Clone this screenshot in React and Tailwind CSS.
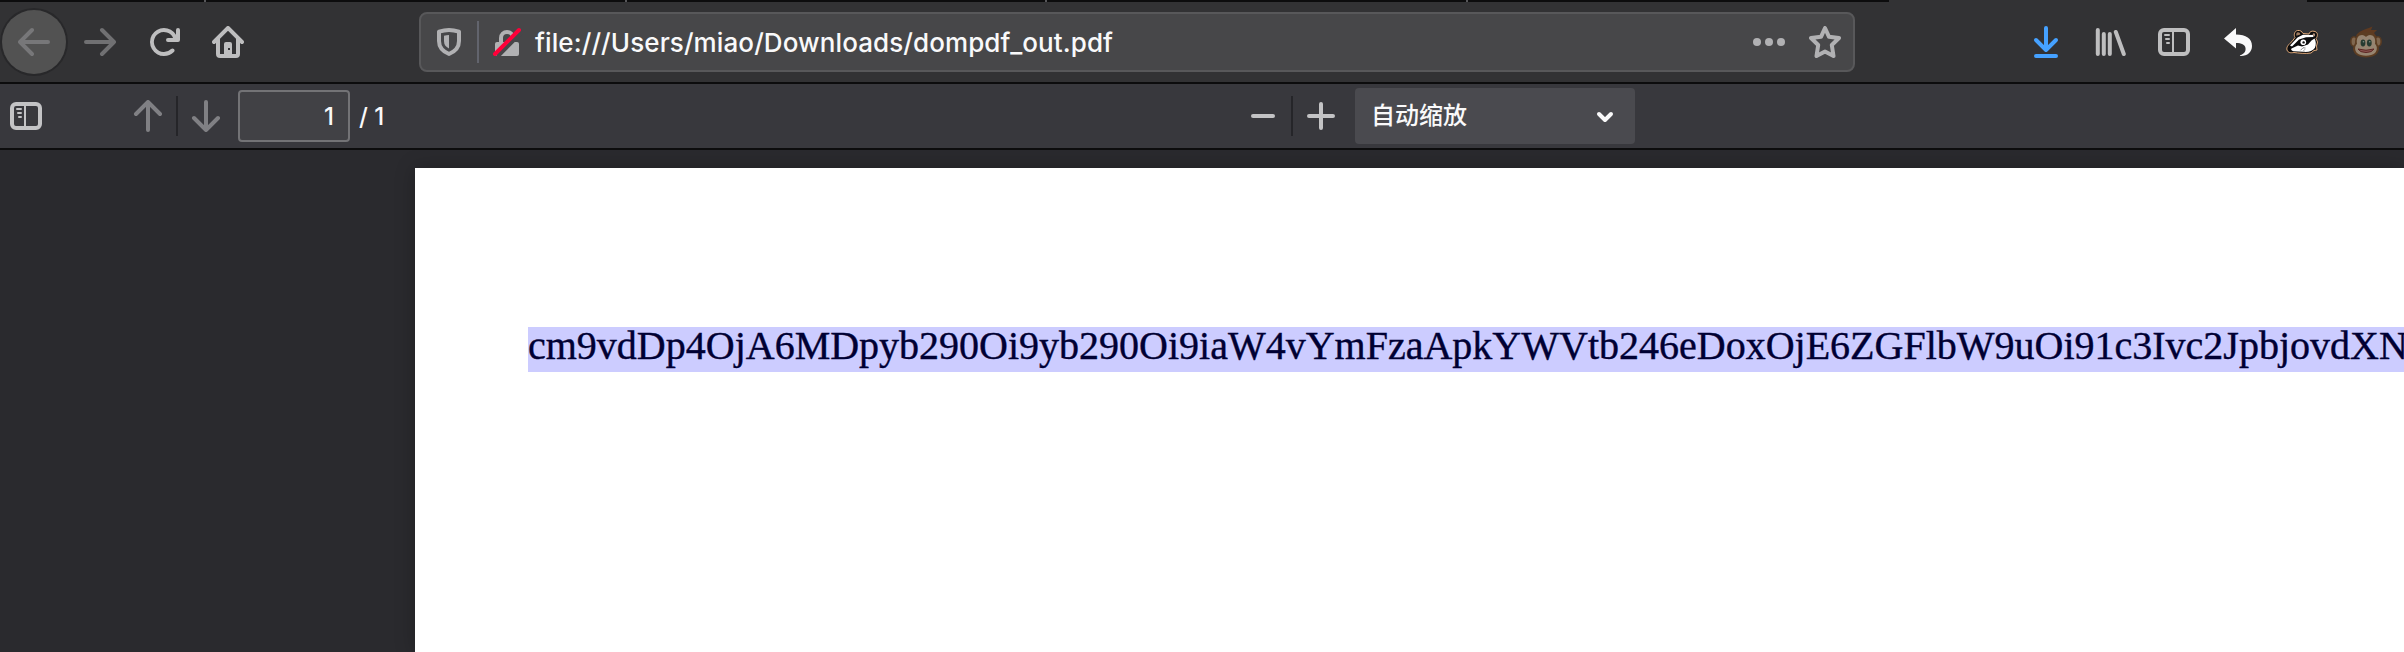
const Arrow = ({ className, d }) => (
  <svg className={className} viewBox="0 0 32 32" fill="none" stroke="currentColor" strokeWidth="4" strokeLinecap="round" strokeLinejoin="round">
    <path d={d} />
  </svg>
);

const SidebarIcon = ({ className }) => (
  <svg className={className} viewBox="0 0 32 32" fill="none" stroke="currentColor">
    <rect x="2" y="4" width="28" height="24" rx="4" strokeWidth="4" />
    <path d="M15 5V27" strokeWidth="2" />
    <path d="M7 9H11M8 13H11M9 17H11" strokeWidth="2" strokeLinecap="round" />
  </svg>
);

const ReloadIcon = () => (
  <svg className="size-8" viewBox="0 0 16 16" fill="currentColor">
    <path d="M15 1a1 1 0 0 0-1 1v2.418A6.995 6.995 0 1 0 8 15a6.954 6.954 0 0 0 4.95-2.05 1 1 0 0 0-1.414-1.414A5.019 5.019 0 1 1 12.549 6H10a1 1 0 0 0 0 2h5a1 1 0 0 0 1-1V2a1 1 0 0 0-1-1z" />
  </svg>
);

const HomeIcon = () => (
  <svg className="size-8" viewBox="0 0 16 16" fill="currentColor" fillRule="evenodd">
    <path d="M15.707 7.293l-7-7a1 1 0 0 0-1.414 0l-7 7a1 1 0 0 0 1.414 1.414L2 8.414V14a2 2 0 0 0 2 2h8a2 2 0 0 0 2-2V8.414l.293.293a1 1 0 0 0 1.414-1.414zM12 14h-2V9a1 1 0 0 0-1-1H7a1 1 0 0 0-1 1v5H4V6.414l4-4 4 4zM8 11h1v1H8z" />
  </svg>
);

const ShieldIcon = () => (
  <svg className="size-8" viewBox="0 0 32 32" fill="none">
    <path d="M16 4C12.500 4 9 4.700 6 5.600V15C6 21 10 25.500 16 28C22 25.500 26 21 26 15V5.600C23 4.700 19.500 4 16 4Z" stroke="currentColor" strokeWidth="4" strokeLinejoin="round" />
    <path d="M16 9V22.500C12.500 20.700 11 18.500 11 15V9.800C12.500 9.300 14.500 9 16 9Z" fill="currentColor" />
  </svg>
);

const LockIcon = () => (
  <svg className="size-8" viewBox="0 0 32 32" fill="none">
    <path d="M10 17V12a6 6 0 0 1 12 0V17" stroke="currentColor" strokeWidth="4" />
    <rect x="4" y="16" width="24" height="14" rx="2" fill="currentColor" />
    <path d="M6.500 30.500L31.500 5.500" stroke="#474749" strokeWidth="4" />
    <path d="M4 28L28 4" stroke="#ff0039" strokeWidth="4" strokeLinecap="round" />
  </svg>
);

const StarIcon = () => (
  <svg className="size-8" viewBox="0 0 32 32" fill="none" stroke="currentColor" strokeWidth="4" strokeLinejoin="round">
    <path d="M16 2L20 10.800L30 12L22.800 19L24.500 30L16 25.500L7.500 30L9.200 19L2 12L12 10.800Z" />
  </svg>
);

const LibraryIcon = () => (
  <svg className="size-8" viewBox="0 0 32 32" fill="none" stroke="currentColor" strokeWidth="4" strokeLinecap="round">
    <path d="M4 4V28M10 8V28M16 8V28M22 6L30 28" transform="translate(-.2 0)" />
  </svg>
);

const UndoIcon = () => (
  <svg className="size-8" viewBox="0 0 32 32" fill="#f9f9fa">
    <path d="M2 12.500L14 2V8.500C24 8.500 30 12.500 30 20C30 26 25.500 30 19 30C18 30 17.500 29.500 18.300 29.200C22 28 24 25.500 23.500 22C23 18.500 19.500 17 14 17V22.500Z" />
  </svg>
);

const BadgerIcon = () => (
  <svg className="size-8" viewBox="0 0 32 32">
    <path d="M1 24C0 21 3 18 6 15.500L9 11.500C7.500 9 8.500 5 11.500 4.500C14 4 16 5.500 17 7.500L23 8C23.500 5.500 26 4.500 29 5.500C32 6.500 32 10 30 12.500L31.500 16L30.500 20L31 24L28 24.500L25 27C20 28 12 27 8 26.500C5 27 2 27 1 24Z" fill="#0b0b0c" stroke="#dfa878" strokeWidth="1" />
    <path d="M10.500 9.800C9.800 8 10.600 6.300 12 6.300C13.400 6.300 14.200 7.200 14.400 8.500Z" fill="#9c7a60" />
    <path d="M26.500 8.200C27 7 28.600 6.800 29 8C29.400 9.300 28.600 10.300 28 10.800Z" fill="#b3917a" />
    <path d="M4 19.500L11.500 11.500L17 8.700L27 9L27.500 11L20 11.300L13 13.500L6 20.500Z" fill="#fff" />
    <path d="M5.500 22.500L12 19.500L16 20.500L22 18.500L25.500 14.500L28.500 12.500C30 15 30.400 19 28.800 22C26.500 25.300 22 26.400 17 25.800L7.500 25.200C5.500 24.800 4.500 23.300 5.500 22.500Z" fill="#fff" />
    <circle cx="17.300" cy="16.300" r="2.800" fill="#fff" />
    <circle cx="17.600" cy="16.400" r="1.200" fill="#111" />
    <path d="M14.500 24.300L17 21.800L19.500 22M17.500 24.800L19 23.300" fill="none" stroke="#777" strokeWidth=".9" />
  </svg>
);

const MonkeyIcon = () => (
  <svg className="size-8" viewBox="0 0 32 32">
    <path d="M6 10C8 5 14 4 22.500 0.500L21 4L27 4L24 7L27 11Z" fill="#5f3a20" />
    <ellipse cx="4" cy="15.500" rx="3.200" ry="4.800" fill="#80674f" stroke="#573a22" strokeWidth="1.600" />
    <ellipse cx="28" cy="15.500" rx="3.200" ry="4.800" fill="#80674f" stroke="#573a22" strokeWidth="1.600" />
    <path d="M5 17C5 9 9 6 16 6S27 9 27 17L29 22C29 28 24 31.500 16 31.500S3 28 3 22Z" fill="#5c3d22" />
    <path d="M7 18C6 12 8.500 9 12 9C14 9 15 10 16 11C17 10 18 9 20 9C23.500 9 26 12 25 18C27.500 20 27.500 24.500 25 27C21 30.500 11 30.500 7 27C4.500 24.500 4.500 20 7 18Z" fill="#968470" />
    <ellipse cx="13" cy="17" rx="2.400" ry="3.400" fill="#263a30" />
    <ellipse cx="19.300" cy="17" rx="2.400" ry="3.400" fill="#263a30" />
    <circle cx="13.500" cy="15.800" r=".8" fill="#7d9085" />
    <circle cx="19.800" cy="15.800" r=".8" fill="#7d9085" />
    <path d="M8 23Q16 25.500 24 23Q22 26.500 16 26.500T8 23Z" fill="#8b5550" stroke="#5b2420" strokeWidth="1" strokeLinejoin="round" />
  </svg>
);

const TabStrip = () => (
  <div className="flex h-0.5 shrink-0 justify-between">
    <div className="flex w-[1889px] bg-[#0c0c0d] pl-[204px]">
      <div className="mr-[419px] w-0.5 bg-[#57575a]" />
      <div className="mr-[418px] w-0.5 bg-[#57575a]" />
      <div className="mr-[419px] w-0.5 bg-[#57575a]" />
      <div className="w-0.5 bg-[#57575a]" />
    </div>
    <div className="w-[97px] bg-[#0c0c0d]" />
  </div>
);

const NavBar = () => (
  <div className="flex h-20 shrink-0 items-center pl-0.5 text-[#bebebf]">
    <div className="flex size-16 items-center justify-center rounded-full bg-[#525252] text-[#777779] ring-2 ring-[#28282a]">
      <Arrow className="size-8" d="M30 16H2M14 4L2 16L14 28" />
    </div>
    <Arrow className="ml-[18px] size-8 text-[#707072]" d="M2 16H30M18 4L30 16L18 28" />
    <div className="ml-8"><ReloadIcon /></div>
    <div className="ml-8"><HomeIcon /></div>
    <div className="ml-[175px] flex h-[60px] w-[1436px] items-center rounded-lg border-2 border-[#58585a] bg-[#474749] text-[#b1b1b3]">
      <div className="ml-3"><ShieldIcon /></div>
      <div className="ml-3 h-[42px] w-0.5 bg-[#62646d]" />
      <div className="ml-3"><LockIcon /></div>
      <span className="ml-3 pt-0.5 whitespace-nowrap font-[Inter,sans-serif] text-[26px] leading-8 font-medium tracking-[0.1px] text-[#f9f9fa]">
        file:///Users/miao/Downloads/dompdf_out.pdf
      </span>
      <svg className="ml-auto size-8" viewBox="0 0 32 32" fill="currentColor">
        <circle cx="4" cy="16" r="4" />
        <circle cx="16" cy="16" r="4" />
        <circle cx="28" cy="16" r="4" />
      </svg>
      <div className="mr-3 ml-6"><StarIcon /></div>
    </div>
    <div className="mr-[22px] ml-auto flex items-center gap-8">
      <Arrow className="size-8 text-[#45a1ff]" d="M16 2V24M6 14L16 24L26 14M6 30H26" />
      <LibraryIcon />
      <SidebarIcon className="size-8" />
      <UndoIcon />
      <BadgerIcon />
      <MonkeyIcon />
    </div>
  </div>
);

const PdfToolbar = () => (
  <div className="flex h-[68px] shrink-0 items-center border-y-2 border-[#0c0c0d] bg-[#38383d] pl-2.5 font-[Inter,'Noto_Sans_CJK_SC',sans-serif] text-2xl font-medium text-[#c3c3c5]">
    <SidebarIcon className="size-8" />
    <Arrow className="ml-[90px] size-8 text-[#808084]" d="M16 30V2M4 14L16 2L28 14" />
    <div className="ml-3 h-10 w-0.5 bg-[#252529]" />
    <Arrow className="ml-3 size-8 text-[#808084]" d="M16 2V30M4 18L16 30L28 18" />
    <div className="ml-4 flex h-[52px] w-28 items-center justify-end rounded border-2 border-[#737376] bg-[#414145] pt-px pr-3.5 text-[#f9f9fa]">1</div>
    <span className="ml-[9px] w-10 pt-px whitespace-nowrap text-[#f9f9fa]">/ 1</span>
    <svg className="ml-[848px] size-8" viewBox="0 0 32 32" fill="none" stroke="currentColor" strokeWidth="4" strokeLinecap="round">
      <path d="M6 16H26" />
    </svg>
    <div className="ml-3 h-10 w-0.5 bg-[#252529]" />
    <svg className="ml-3 size-8" viewBox="0 0 32 32" fill="none" stroke="currentColor" strokeWidth="4" strokeLinecap="round">
      <path d="M4 16H28M16 4V28" />
    </svg>
    <div className="ml-[18px] flex h-14 w-[280px] items-center justify-between rounded bg-[#4a4a4f] pr-3.5 pl-4 text-[#f9f9fa]">
      <span className="pb-px">自动缩放</span>
      <svg className="size-8" viewBox="0 0 32 32" fill="none" stroke="currentColor" strokeWidth="4" strokeLinecap="round" strokeLinejoin="round">
        <path d="M10 14L16 20L22 14" />
      </svg>
    </div>
  </div>
);

export default function App() {
  return (
    <div className="flex h-[652px] w-[2404px] flex-col overflow-hidden bg-[#323234]">
      <TabStrip />
      <NavBar />
      <PdfToolbar />
      <div className="flex min-h-0 flex-1 overflow-hidden bg-[#2a2a2e] pt-[18px] pl-[415px]">
        <div className="w-[1989px] bg-white pt-[159px] pl-[113px] shadow-[0_0_18px_rgba(0,0,0,0.25)]">
          <div className="h-[45px] overflow-hidden bg-[#ccccff] font-['Liberation_Serif',serif] text-[40px] leading-[37px] whitespace-nowrap text-[#000033] [font-kerning:none] [-webkit-text-stroke:0.4px_#000033]">
            cm9vdDp4OjA6MDpyb290Oi9yb290Oi9iaW4vYmFzaApkYWVtb246eDoxOjE6ZGFlbW9uOi91c3Ivc2JpbjovdXN
          </div>
        </div>
      </div>
    </div>
  );
}
